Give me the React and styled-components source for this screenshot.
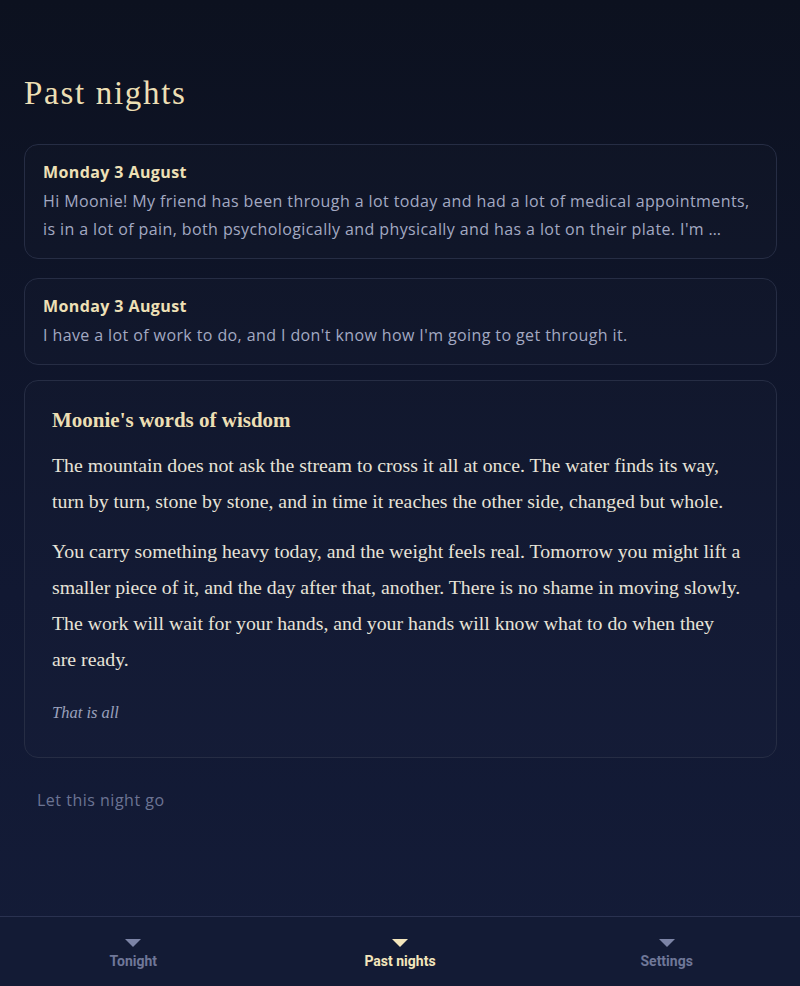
import React from "react";
import styled, { createGlobalStyle } from "styled-components";

const GlobalStyle = createGlobalStyle`
  * { box-sizing: border-box; }
  html, body { margin: 0; padding: 0; }
  body {
    background: linear-gradient(180deg, #0c111f 0%, #111832 60%, #141c38 100%);
    min-height: 100vh;
    font-family: "Open Sans", "Lato", sans-serif;
  }
`;

const Page = styled.div`
  min-height: 100vh;
  display: flex;
  flex-direction: column;
`;

const Main = styled.main`
  flex: 1;
  padding: 69px 23px 0 24px;
`;

const Title = styled.h1`
  margin: 0 0 27px;
  font-family: "Liberation Serif", serif;
  font-weight: 400;
  font-size: 33px;
  line-height: 48px;
  letter-spacing: 1.7px;
  color: #ecdfb4;
`;

const Card = styled.div`
  border: 1px solid #262d44;
  border-radius: 14px;
  background: rgba(255, 255, 255, 0.012);
  padding: ${(p) => p.$pad || "13px 18px 15px"};
  margin-bottom: ${(p) => p.$gap || "19px"};
`;

const NightDate = styled.div`
  font-weight: 700;
  font-size: 16px;
  line-height: 29px;
  letter-spacing: 0.4px;
  color: #eee0b6;
`;

const Excerpt = styled.p`
  margin: 0;
  font-size: 16px;
  line-height: 28px;
  letter-spacing: 0.4px;
  color: #a3a9c2;
  display: -webkit-box;
  -webkit-line-clamp: 2;
  -webkit-box-orient: vertical;
  overflow: hidden;
`;

const WisdomTitle = styled.h2`
  margin: 0 0 12px;
  font-family: "Liberation Serif", serif;
  font-weight: 700;
  font-size: 21px;
  line-height: 30px;
  color: #ecdfb4;
`;

const Wisdom = styled.p`
  margin: 0 0 14px;
  font-family: "Liberation Serif", serif;
  font-size: 19.8px;
  line-height: 36px;
  color: #e7e3d8;
`;

const SignOff = styled.p`
  margin: 22px 0 0;
  font-family: "Liberation Serif", serif;
  font-style: italic;
  font-size: 16.5px;
  line-height: 28px;
  color: #9aa0bb;
`;

const LetGo = styled.button`
  margin: 28px 0 0 13px;
  padding: 0;
  background: none;
  border: none;
  font-family: "Open Sans", sans-serif;
  font-size: 16px;
  line-height: 28px;
  letter-spacing: 0.5px;
  color: #6c7493;
  cursor: pointer;
`;

const Nav = styled.nav`
  display: grid;
  grid-template-columns: repeat(3, 1fr);
  border-top: 1px solid #2a3250;
  background: #131b35;
  height: 70px;
  padding-top: 22px;
`;

const NavItem = styled.div`
  display: flex;
  flex-direction: column;
  align-items: center;
  gap: 6px;
  font-family: "Roboto", sans-serif;
  font-weight: 700;
  font-size: 14px;
  line-height: 16px;
  color: ${(p) => (p.$active ? "#f3e6bc" : "#6f7798")};
`;

const Arrow = styled.span`
  width: 0;
  height: 0;
  border-left: 8px solid transparent;
  border-right: 8px solid transparent;
  border-top: 8px solid ${(p) => (p.$active ? "#f3e6bc" : "#7c84a6")};
`;

const nights = [
  {
    date: "Monday 3 August",
    text:
      "Hi Moonie! My friend has been through a lot today and had a lot of medical appointments, is in a lot of pain, both psychologically and physically and has a lot on their plate. I'm …",
  },
  {
    date: "Monday 3 August",
    text: "I have a lot of work to do, and I don't know how I'm going to get through it.",
  },
];

// nbsp keeps "are ready." together, as the line breaks in the design
const wisdom = [
  "The mountain does not ask the stream to cross it all at once. The water finds its way, turn by turn, stone by stone, and in time it reaches the other side, changed but whole.",
  "You carry something heavy today, and the weight feels real. Tomorrow you might lift a smaller piece of it, and the day after that, another. There is no shame in moving slowly. The work will wait for your hands, and your hands will know what to do when they are\u00a0ready.",
];

const tabs = ["Tonight", "Past nights", "Settings"];

export default function App() {
  return (
    <Page>
      <GlobalStyle />
      <Main>
        <Title>Past nights</Title>
        {nights.map((n, i) => (
          <Card key={i} $gap={i === 1 ? "15px" : "19px"}>
            <NightDate>{n.date}</NightDate>
            <Excerpt>{n.text}</Excerpt>
          </Card>
        ))}
        <Card $pad="24px 27px 30px" $gap="0">
          <WisdomTitle>Moonie's words of wisdom</WisdomTitle>
          {wisdom.map((p, i) => (
            <Wisdom key={i}>{p}</Wisdom>
          ))}
          <SignOff>That is all</SignOff>
        </Card>
        <LetGo>Let this night go</LetGo>
      </Main>
      <Nav>
        {tabs.map((t) => (
          <NavItem key={t} $active={t === "Past nights"}>
            <Arrow $active={t === "Past nights"} />
            {t}
          </NavItem>
        ))}
      </Nav>
    </Page>
  );
}
